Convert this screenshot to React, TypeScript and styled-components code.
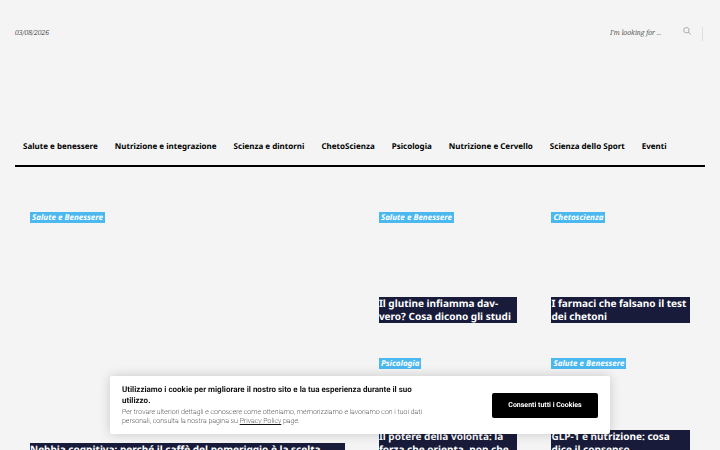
import React from "react";
import styled, { createGlobalStyle } from "styled-components";

const GlobalStyle = createGlobalStyle`
  * { box-sizing: border-box; }
  body {
    margin: 0;
    background: #f4f4f4;
    color: #000;
    font-family: "Noto Sans", sans-serif;
    text-rendering: geometricPrecision;
    overflow-x: hidden;
  }
  button, input { text-rendering: inherit; }
`;

const Page = styled.div`
  padding: 0 15px;
`;

const TopBar = styled.header`
  display: flex;
  align-items: center;
  justify-content: space-between;
  height: 68px;
  color: #111;
  font: italic 300 7px/16px "Noto Serif", "Droid Serif", serif;
`;

const DateText = styled.time``;

const SearchForm = styled.form`
  display: flex;
  align-items: center;
  height: 14px;
  padding-right: 2px;
`;

const SearchInput = styled.input`
  width: 73px;
  padding: 0;
  border: 0;
  outline: 0;
  background: transparent;
  color: #111;
  font: inherit;
  &::placeholder { color: #111; opacity: 1; }
`;

const SearchButton = styled.button`
  display: flex;
  align-items: flex-start;
  width: 20px;
  height: 14px;
  padding: 0;
  border: 0;
  border-right: 1px solid #ddd;
  background: transparent;
  color: #999;
`;

const Nav = styled.nav`
  margin-top: 59px;
  height: 40px;
  border-bottom: 2px solid #000;
`;

const NavList = styled.ul`
  display: flex;
  gap: 17px;
  margin: 0;
  padding: 12px 8px 0;
  list-style: none;
`;

const NavLink = styled.a`
  display: block;
  color: #000;
  font-size: 8px;
  line-height: 16px;
  font-weight: 700;
  text-decoration: none;
  white-space: nowrap;
`;

const Grid = styled.main`
  display: grid;
  grid-template-columns: 25fr 11fr 11fr;
  grid-template-rows: 112px auto;
  column-gap: 34px;
  row-gap: 34px;
  padding: 45px 15px 0;
`;

const Card = styled.article<{ $lead?: boolean }>`
  display: flex;
  flex-direction: column;
  align-items: flex-start;
  grid-row: ${(p) => (p.$lead ? "span 2" : "auto")};
`;

const Tag = styled.a`
  padding: 0 2px;
  background: #4bb8f0;
  color: #fff;
  font-size: 8px;
  font-style: italic;
  font-weight: 700;
  line-height: 11px;
  text-decoration: none;
`;

const Title = styled.h2<{ $gap: number }>`
  width: 100%;
  margin: ${(p) => p.$gap}px 0 0;
  background: #181c3a;
  color: #fff;
  font-size: 10px;
  line-height: 13px;
  font-weight: 700;
`;

const Banner = styled.section`
  position: fixed;
  bottom: 16px;
  left: 50%;
  transform: translateX(-50%);
  display: flex;
  align-items: center;
  justify-content: space-between;
  width: 500px;
  max-width: 100%;
  padding: 8px 12px;
  border-radius: 2px;
  background: #fff;
  box-shadow: 0 0 12px rgba(0, 0, 0, 0.18);
  font-family: Roboto, sans-serif;
`;

const BannerCopy = styled.div`
  width: 306px;
`;

const BannerTitle = styled.h3`
  margin: 0 0 2px;
  color: #111;
  font-size: 8px;
  line-height: 11px;
  font-weight: 700;
`;

const BannerText = styled.p`
  margin: 0;
  color: #111;
  font-size: 7px;
  line-height: 9px;
  font-weight: 200;
`;

const PolicyLink = styled.a`
  color: inherit;
`;

const Consent = styled.button`
  width: 106px;
  height: 25px;
  padding: 0;
  border: 0;
  border-radius: 2px;
  background: #000;
  color: #fff;
  font: 700 7px/10px Roboto, sans-serif;
`;

const sections = [
  "Salute e benessere",
  "Nutrizione e integrazione",
  "Scienza e dintorni",
  "ChetoScienza",
  "Psicologia",
  "Nutrizione e Cervello",
  "Scienza dello Sport",
  "Eventi",
];

const articles = [
  { tag: "Salute e Benessere", title: "Nebbia cognitiva: perché il caffè del pomeriggio è la scelta", gap: 220, lead: true },
  { tag: "Salute e Benessere", title: "Il glutine infiamma dav\u00advero? Cosa dicono gli studi", gap: 74 },
  { tag: "Chetoscienza", title: "I farmaci che falsano il test dei chetoni", gap: 74 },
  { tag: "Psicologia", title: "Il potere della volontà: la forza che orienta, non che", gap: 61 },
  { tag: "Salute e Benessere", title: "GLP-1 e nutrizione: cosa dice il consenso", gap: 61 },
];

export default function App() {
  return (
    <>
      <GlobalStyle />
      <Page>
        <TopBar>
          <DateText>03/08/2026</DateText>
          <SearchForm role="search">
            <SearchInput type="text" aria-label="Search" placeholder="I'm looking for ..." />
            <SearchButton type="button" aria-label="Submit search">
              <svg width="8" height="8" viewBox="0 0 8 8" fill="none" stroke="currentColor">
                <circle cx="3.4" cy="3.2" r="2.7" strokeWidth="0.8" />
                <path d="M5.3 5.1 7.7 7.5" strokeWidth="0.9" />
              </svg>
            </SearchButton>
          </SearchForm>
        </TopBar>
        <Nav aria-label="Main">
          <NavList>
            {sections.map((name) => (
              <li key={name}>
                <NavLink href="#">{name}</NavLink>
              </li>
            ))}
          </NavList>
        </Nav>
        <Grid>
          {articles.map((a) => (
            <Card key={a.title} $lead={a.lead}>
              <Tag href="#">{a.tag}</Tag>
              <Title $gap={a.gap}>{a.title}</Title>
            </Card>
          ))}
        </Grid>
      </Page>
      <Banner aria-label="Cookie">
        <BannerCopy>
          <BannerTitle>
            Utilizziamo i cookie per migliorare il nostro sito e la tua esperienza durante il suo utilizzo.
          </BannerTitle>
          <BannerText>
            Per trovare ulteriori dettagli e conoscere come otteniamo, memorizziamo e lavoriamo con i tuoi dati
            personali, consulta la nostra pagina su <PolicyLink href="#">Privacy Policy</PolicyLink> page.
          </BannerText>
        </BannerCopy>
        <Consent type="button">Consenti tutti i Cookies</Consent>
      </Banner>
    </>
  );
}
